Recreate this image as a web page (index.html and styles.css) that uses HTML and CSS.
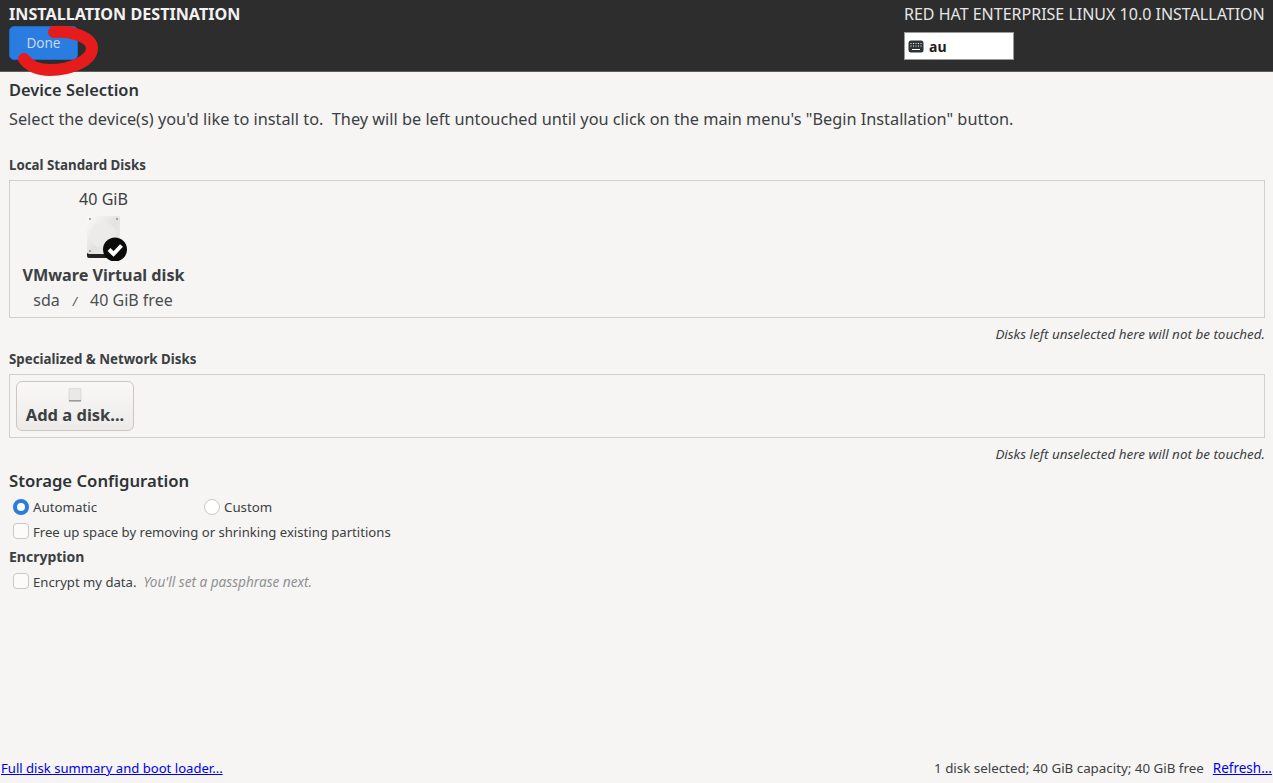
FILE: index.html
```html
<!DOCTYPE html>
<html lang="en">
<head>
<meta charset="utf-8">
<title>Installation Destination</title>
<link rel="stylesheet" href="styles.css">
</head>
<body>
<div class="app">
  <header class="topbar">
    <div class="topbar-left">
      <div class="spoke-title">INSTALLATION DESTINATION</div>
      <button class="done">Done</button>
      <svg class="scribble" width="110" height="80" viewBox="0 0 110 80"><path d="M54 32 C72 30 92 38 92 48 C92 61 70 70 50 70 C40 70 30 67 24 59" fill="none" stroke="#e61c1c" stroke-width="12" stroke-linecap="round"/></svg>
    </div>
    <div class="topbar-right">
      <div class="product">RED HAT ENTERPRISE LINUX 10.0 INSTALLATION</div>
      <div class="layout">
        <svg class="kbd" width="16" height="13" viewBox="0 0 16 13"><rect x="0.500" y="0.500" width="15" height="12" rx="2.500" fill="#2e3436"/><path d="M2.500 3.500h1M5 3.500h1M7.500 3.500h1M10 3.500h1M12.500 3.500h1M2.500 6h1M5 6h1M7.500 6h1M10 6h1M12.500 6h1M4 9.500h8" stroke="#fff" stroke-width="1"/></svg>
        <span>au</span>
      </div>
    </div>
  </header>
  <main class="content">
    <h2 class="section-title first">Device Selection</h2>
    <p class="intro">Select the device(s) you'd like to install to.&nbsp; They will be left untouched until you click on the main menu's "Begin Installation" button.</p>
    <h3 class="group-title local">Local Standard Disks</h3>
    <div class="panel disks">
      <div class="disk">
        <div class="disk-size">40 GiB</div>
        <svg class="disk-icon" width="44" height="46" viewBox="0 0 44 46">
          <defs><linearGradient id="dg" x1="0" y1="0" x2="1" y2="1"><stop offset="0" stop-color="#fafaf9"/><stop offset="0.500" stop-color="#e2e2e0"/><stop offset="1" stop-color="#f2f2f1"/></linearGradient></defs>
          <rect x="2" y="1" width="33" height="41" rx="2" fill="url(#dg)"/>
          <circle cx="18" cy="20" r="13" fill="#ecebea"/>
          <path d="M2 38v3a2 2 0 0 0 2 2h24v-4h-24z" fill="#232323"/>
          <circle cx="5" cy="4" r="1" fill="#8a8a8a"/><circle cx="32" cy="4" r="1" fill="#8a8a8a"/><circle cx="5" cy="36" r="1" fill="#8a8a8a"/>
          <circle cx="30" cy="34.500" r="12" fill="#0b0b0b"/>
          <path d="M24 34.500l4.500 4.500 8-8.500" fill="none" stroke="#fff" stroke-width="4"/>
        </svg>
        <div class="disk-name">VMware Virtual disk</div>
        <div class="disk-info"><span>sda</span><span class="slash">/</span><span>40 GiB free</span></div>
      </div>
    </div>
    <div class="note">Disks left unselected here will not be touched.</div>
    <h3 class="group-title special">Specialized &amp; Network Disks</h3>
    <div class="panel add-panel">
      <button class="add-disk">
        <svg class="add-icon" width="14" height="14" viewBox="0 0 14 14"><rect x="1" y="0.500" width="12" height="13" rx="1" fill="#e9e9e7" stroke="#cfcfcd" stroke-width="0.600"/><rect x="1" y="12" width="12" height="1.500" fill="#9a9a9a"/></svg>
        <span>Add a disk...</span>
      </button>
    </div>
    <div class="note second">Disks left unselected here will not be touched.</div>
    <h2 class="section-title storage">Storage Configuration</h2>
    <div class="radios">
      <label class="option auto"><span class="radio on"></span>Automatic</label>
      <label class="option"><span class="radio"></span>Custom</label>
    </div>
    <label class="option check-row"><span class="check"></span>Free up space by removing or shrinking existing partitions</label>
    <h3 class="group-title encryption">Encryption</h3>
    <label class="option check-row encrypt"><span class="check"></span>Encrypt my data.<em class="hint">You'll set a passphrase next.</em></label>
  </main>
  <footer class="footer">
    <a class="link" href="#">Full disk summary and boot loader...</a>
    <div class="status"><span>1 disk selected; 40 GiB capacity; 40 GiB free</span><a class="link refresh" href="#">Refresh...</a></div>
  </footer>
</div>
</body>
</html>
```
FILE: styles.css
```css
* { box-sizing: border-box; }
html, body { margin: 0; height: 100%; }
body {
  font-family: "Noto Sans", sans-serif;
  color: #2e3436;
  background: #f6f5f4;
  overflow: hidden;
}
.app { height: 783px; display: flex; flex-direction: column; }
.topbar {
  height: 72px;
  flex: none;
  background: #2d2d2d;
  border-bottom: 1px solid #5c5c5c;
  padding: 0 7px 0 9px;
  display: flex;
  justify-content: space-between;
  color: #fff;
}
.topbar-left { position: relative; }
.spoke-title { font-size: 16.150px; font-weight: 700; line-height: 20px; margin-top: 4px; color: #f2f2f2; white-space: nowrap; }
.done {
  display: block;
  width: 69px;
  height: 34px;
  margin-top: 2px;
  padding: 0;
  border: 1px solid #1b6acb;
  border-radius: 5px;
  background: #2b7ce0;
  color: #c8d8ea;
  font: 13.500px "Noto Sans", sans-serif;
}
.scribble { position: absolute; left: -9px; top: 0; }
.topbar-right { display: flex; flex-direction: column; align-items: flex-start; width: 362px; }
.product { font-size: 16px; line-height: 20px; margin-top: 4px; color: #e6e6e6; white-space: nowrap; }
.layout {
  width: 110px;
  height: 28px;
  margin-top: 8px;
  background: #fff;
  border: 1px solid #9a9a9a;
  color: #1d1d1d;
  display: flex;
  align-items: center;
  gap: 5px;
  padding-left: 3px;
  font-size: 14px;
  font-weight: 700;
}
.content { flex: 1; padding: 0 8px 0 9px; }
.section-title { margin: 0; font-size: 16.400px; font-weight: 600; line-height: 20px; }
.section-title.first { margin-top: 8px; }
.intro { margin: 8px 0 0; font-size: 16.300px; line-height: 22px; white-space: nowrap; color: #3b4042; }
.group-title { margin: 0; font-size: 13.300px; font-weight: 700; line-height: 18px; color: #3b4042; }
.group-title.local { margin-top: 26px; }
.panel { border: 1px solid #cfcfcb; }
.disks { height: 138px; margin-top: 6px; padding: 8px 0 0 11px; }
.disk { width: 165px; display: flex; flex-direction: column; align-items: center; }
.disk-size { font-size: 16.100px; line-height: 20px; color: #3b4042; }
.disk-icon { margin-top: 6px; margin-left: 7px; }
.disk-name { font-size: 16.200px; font-weight: 700; line-height: 22px; margin-top: 3px; white-space: nowrap; color: #3b4042; }
.disk-info { font-size: 16px; line-height: 22px; margin-top: 3px; margin-right: 1px; display: flex; gap: 13px; color: #4a4f50; align-items: baseline; }
.slash { font-size: 12px; font-style: italic; }
.note { font-size: 13.450px; font-style: italic; line-height: 18px; text-align: right; margin-top: 7px; color: #3b4042; }
.group-title.special { margin-top: 7px; }
.add-panel { height: 64px; margin-top: 6px; padding: 6px; }
.add-disk {
  width: 118px;
  height: 50px;
  border: 1px solid #cdc7c2;
  border-radius: 6px;
  background: linear-gradient(#f9f8f7, #ecebe9);
  color: #3b4042;
  font: 700 16.500px "Noto Sans", sans-serif;
  display: flex;
  flex-direction: column;
  align-items: center;
  padding: 6px 0 0;
}
.add-icon { display: block; }
.add-disk span { line-height: 22px; margin-top: 2px; }
.note.second { margin-top: 7px; }
.section-title.storage { margin-top: 8px; font-size: 16.700px; }
.radios { display: flex; margin-top: 7px; margin-left: 4px; }
.option { display: flex; align-items: center; font-size: 13.300px; line-height: 18px; white-space: nowrap; color: #3b4042; }
.auto { width: 191px; }
.radio {
  width: 16px; height: 16px; border-radius: 50%;
  border: 1px solid #cdc7c2; background: #fff; margin-right: 4px;
}
.radio.on { border: 4.500px solid #2b7ce0; }
.check {
  width: 16px; height: 16px; border-radius: 4px;
  border: 1px solid #cdc7c2; background: #fbfbfa; margin: -2px 4px 0 0;
}
.check-row { margin-left: 4px; margin-top: 7px; font-size: 13.130px; }
.group-title.encryption { margin-top: 7px; font-size: 14px; }
.encrypt { margin-top: 7px; }
.hint { color: #8f9192; margin-left: 7px; font-size: 13.600px; }
.footer {
  flex: none;
  height: 30px;
  display: flex;
  justify-content: space-between;
  align-items: flex-start;
  padding: 6px 1px 0 1px;
  font-size: 13.100px;
  line-height: 18px;
}
.link { color: #0000ee; }
.status { display: flex; gap: 9px; color: #3b4042; font-size: 13.350px; }
.refresh { font-size: 13.500px; }
```
